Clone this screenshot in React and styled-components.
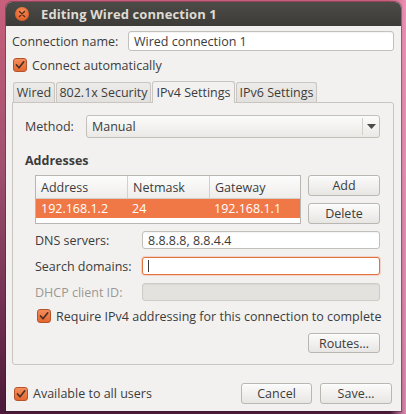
import React from "react";
import styled, { createGlobalStyle, css } from "styled-components";

const GlobalStyle = createGlobalStyle`
  html, body { margin: 0; padding: 0; }
  body {
    font-family: "Open Sans", "DejaVu Sans", sans-serif;
    font-size: 12.5px;
    color: #3c3c3c;
  }
  * { box-sizing: border-box; }
`;

const Desktop = styled.div`
  width: 406px;
  height: 414px;
  overflow: hidden;
  padding: 2px 5px 0 6px;
  background:
    linear-gradient(90deg, rgba(0,0,0,0) 0%, rgba(0,0,0,0) 96%, rgba(240,150,190,0.9) 100%),
    linear-gradient(180deg, #c8607c 0%, #a0506e 40%, #6a2a4c 80%, #4a1a38 100%);
`;

const Window = styled.div`
  height: 409px;
  display: flex;
  flex-direction: column;
  background: #f2f1f0;
  border-radius: 6px 6px 0 0;
  overflow: hidden;
  box-shadow: 0 0 0 1px rgba(40, 20, 30, 0.35);
`;

const TitleBar = styled.div`
  height: 24px;
  flex: none;
  display: flex;
  align-items: center;
  gap: 12px;
  padding-left: 9px;
  background: linear-gradient(180deg, #4c4b47 0%, #3c3b37 100%);
`;

const CloseButton = styled.div`
  width: 14px;
  height: 14px;
  border-radius: 50%;
  background: radial-gradient(circle at 50% 35%, #f5915e 0%, #e6672f 60%, #c94f1e 100%);
  display: flex;
  align-items: center;
  justify-content: center;
`;

const Title = styled.div`
  font-weight: 700;
  font-size: 13px;
  color: #dfdbd2;
  letter-spacing: 0.1px;
`;

const Body = styled.div`
  flex: 1;
  display: flex;
  flex-direction: column;
  padding: 5px 7px 7px 6px;
`;

const NameRow = styled.div`
  display: flex;
  align-items: center;
  height: 20px;
`;

const Label = styled.span`
  color: ${(p) => (p.$disabled ? "#9b9893" : "#3c3c3c")};
  white-space: nowrap;
  ${(p) => p.$width && css`width: ${p.$width}px; flex: none;`}
`;

const Entry = styled.div`
  flex: 1;
  height: ${(p) => p.$h || 20}px;
  display: flex;
  align-items: center;
  padding-left: 5px;
  border-radius: 3px;
  background: ${(p) => (p.$disabled ? "#e4e2df" : "#ffffff")};
  border: 1px solid ${(p) => (p.$focus ? "#e2723e" : p.$disabled ? "#cfcbc6" : "#c3bfba")};
  box-shadow: ${(p) => (p.$focus ? "0 0 0 1px rgba(240,119,70,0.25)" : "inset 0 1px 1px rgba(0,0,0,0.05)")};
  white-space: nowrap;
  color: #3c3c3c;
`;

const Caret = styled.span`
  width: 1px;
  height: 12px;
  background: #3c3c3c;
`;

const CheckRow = styled.label`
  display: flex;
  align-items: center;
  gap: 5px;
  height: 14px;
  white-space: nowrap;
  margin-top: ${(p) => p.$mt || 0}px;
  padding-left: ${(p) => p.$indent || 0}px;
`;

const Box = styled.span`
  width: 14px;
  height: 14px;
  flex: none;
  border-radius: 3px;
  border: 1px solid #b4542a;
  background: linear-gradient(180deg, #f58d5c 0%, #e5672f 100%);
  display: flex;
  align-items: center;
  justify-content: center;
`;

const Check = () => (
  <Box>
    <svg width="10" height="10" viewBox="0 0 10 10">
      <path d="M1.5 5 L4 7.8 L8.8 1.8" fill="none" stroke="#4a3026" strokeWidth="1.7" strokeLinecap="round" strokeLinejoin="round" />
    </svg>
  </Box>
);

const TabStrip = styled.div`
  display: flex;
  align-items: flex-end;
  height: 21px;
  margin-top: 9px;
  padding-left: 1px;
  gap: 1px;
`;

const Tab = styled.div`
  width: ${(p) => p.$w}px;
  flex: none;
  height: ${(p) => (p.$active ? 22 : 20)}px;
  margin-bottom: ${(p) => (p.$active ? -1 : 0)}px;
  position: relative;
  z-index: ${(p) => (p.$active ? 1 : 0)};
  display: flex;
  align-items: center;
  justify-content: center;
  border: 1px solid #c9c5c0;
  border-bottom: none;
  border-radius: 3px 3px 0 0;
  background: ${(p) => (p.$active ? "#f2f1f0" : "linear-gradient(180deg, #ecebe9 0%, #e3e1de 100%)")};
  white-space: nowrap;
  color: #3c3c3c;
`;

const Panel = styled.div`
  height: 263px;
  flex: none;
  border: 1px solid #c9c5c0;
  border-radius: 0 3px 3px 3px;
  padding: 12px 13px 0 12px;
  display: flex;
  flex-direction: column;
`;

const MethodRow = styled.div`
  display: flex;
  align-items: center;
  height: 23px;
`;

const Combo = styled.div`
  flex: 1;
  height: 23px;
  display: flex;
  align-items: center;
  border: 1px solid #c3bfba;
  border-radius: 3px;
  background: linear-gradient(180deg, #fbfbfa 0%, #ebe9e6 100%);
  padding-left: 5px;
`;

const ComboText = styled.span`
  flex: 1;
`;

const ComboArrow = styled.span`
  width: 17px;
  height: 17px;
  border-left: 1px solid #d3cfca;
  display: flex;
  align-items: center;
  justify-content: center;
`;

const SectionTitle = styled.div`
  font-weight: 700;
  margin-top: 15px;
  line-height: 16px;
`;

const AddressArea = styled.div`
  display: flex;
  gap: 7px;
  margin-top: 6px;
  padding-left: 10px;
`;

const Table = styled.div`
  width: 267px;
  height: 49px;
  border: 1px solid #b9b5b0;
  background: #ffffff;
  display: flex;
  flex-direction: column;
`;

const TRow = styled.div`
  display: grid;
  grid-template-columns: 91px 82px 1fr;
  height: ${(p) => p.$h}px;
  ${(p) =>
    p.$header
      ? css`
          background: linear-gradient(180deg, #fdfdfd 0%, #eeedeb 100%);
          border-bottom: 1px solid #d3d0cb;
        `
      : css`
          background: ${p.$selected ? "#f07746" : "#ffffff"};
          color: ${p.$selected ? "#ffffff" : "#3c3c3c"};
        `}
`;

const Cell = styled.div`
  display: flex;
  align-items: center;
  padding-left: 5px;
  ${(p) => p.$sep && css`border-left: 1px solid #d3d0cb;`}
  white-space: nowrap;
`;

const ButtonCol = styled.div`
  display: flex;
  flex-direction: column;
  gap: 7px;
`;

const Button = styled.div`
  width: ${(p) => p.$w || 72}px;
  height: ${(p) => p.$h || 21}px;
  flex: none;
  display: flex;
  align-items: center;
  justify-content: center;
  border: 1px solid #bab6b1;
  border-radius: 3px;
  background: linear-gradient(180deg, #fbfbfb 0%, #e8e6e3 100%);
  box-shadow: inset 0 1px 0 rgba(255,255,255,0.8);
  color: #3c3c3c;
  white-space: nowrap;
`;

const FormGrid = styled.div`
  display: grid;
  grid-template-columns: 107px 1fr;
  row-gap: 8px;
  align-items: center;
  margin-top: 7px;
  padding-left: 10px;
`;

const RoutesRow = styled.div`
  display: flex;
  justify-content: flex-end;
  margin-top: 10px;
`;

const BottomRow = styled.div`
  display: flex;
  align-items: center;
  margin-top: 18px;
  padding: 0 2px;
  gap: 8px;
`;

const Spacer = styled.div`
  flex: 1;
`;

export default function App() {
  return (
    <>
      <GlobalStyle />
      <Desktop>
        <Window>
          <TitleBar>
            <CloseButton>
              <svg width="8" height="8" viewBox="0 0 8 8">
                <path d="M1.5 1.5 L6.5 6.5 M6.5 1.5 L1.5 6.5" stroke="#5a2a14" strokeWidth="1.4" strokeLinecap="round" />
              </svg>
            </CloseButton>
            <Title>Editing Wired connection 1</Title>
          </TitleBar>
          <Body>
            <NameRow>
              <Label $width={116}>Connection name:</Label>
              <Entry $h={20}>Wired connection 1</Entry>
            </NameRow>
            <CheckRow $mt={7} $indent={1}>
              <Check />
              <span>Connect automatically</span>
            </CheckRow>
            <TabStrip>
              <Tab $w={42}>Wired</Tab>
              <Tab $w={95}>802.1x Security</Tab>
              <Tab $w={83} $active>IPv4 Settings</Tab>
              <Tab $w={81}>IPv6 Settings</Tab>
            </TabStrip>
            <Panel>
              <MethodRow>
                <Label $width={61}>Method:</Label>
                <Combo>
                  <ComboText>Manual</ComboText>
                  <ComboArrow>
                    <svg width="9" height="5" viewBox="0 0 9 5">
                      <path d="M0 0 L9 0 L4.5 5 Z" fill="#4a4a48" />
                    </svg>
                  </ComboArrow>
                </Combo>
              </MethodRow>
              <SectionTitle>Addresses</SectionTitle>
              <AddressArea>
                <Table>
                  <TRow $header $h={23}>
                    <Cell>Address</Cell>
                    <Cell $sep>Netmask</Cell>
                    <Cell $sep>Gateway</Cell>
                  </TRow>
                  <TRow $selected $h={19}>
                    <Cell>192.168.1.2</Cell>
                    <Cell>24</Cell>
                    <Cell>192.168.1.1</Cell>
                  </TRow>
                </Table>
                <ButtonCol>
                  <Button>Add</Button>
                  <Button>Delete</Button>
                </ButtonCol>
              </AddressArea>
              <FormGrid>
                <Label>DNS servers:</Label>
                <Entry $h={18}>8.8.8.8, 8.8.4.4</Entry>
                <Label>Search domains:</Label>
                <Entry $h={18} $focus>
                  <Caret />
                </Entry>
                <Label $disabled>DHCP client ID:</Label>
                <Entry $h={18} $disabled />
              </FormGrid>
              <CheckRow $mt={8} $indent={12}>
                <Check />
                <span>Require IPv4 addressing for this connection to complete</span>
              </CheckRow>
              <RoutesRow>
                <Button $h={20}>Routes…</Button>
              </RoutesRow>
            </Panel>
            <BottomRow>
              <CheckRow>
                <Check />
                <span>Available to all users</span>
              </CheckRow>
              <Spacer />
              <Button $w={71}>Cancel</Button>
              <Button>Save…</Button>
            </BottomRow>
          </Body>
        </Window>
      </Desktop>
    </>
  );
}
